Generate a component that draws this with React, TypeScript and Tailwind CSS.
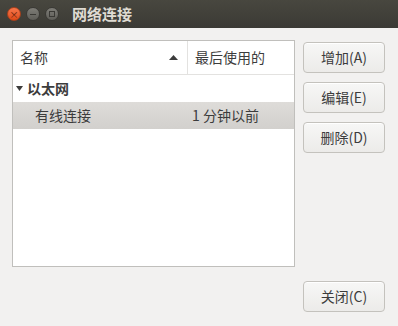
import React from "react";

const font = { fontFamily: '"Noto Sans CJK SC", "Noto Sans", sans-serif' };

function Btn({ label }: { label: string }) {
  return (
    <button className="w-[82px] h-[31px] rounded-[4px] border border-[#c4c2bd] bg-gradient-to-b from-[#f7f7f6] to-[#ecebe9] text-[14px] text-[#3c3c3c] shadow-[inset_0_1px_0_#ffffff] flex items-center justify-center">
      {label}
    </button>
  );
}

export default function App() {
  return (
    <div className="w-[398px] h-[326px] bg-[#f2f1f0] flex flex-col overflow-hidden" style={font}>
      {/* title bar */}
      <div className="h-[28px] bg-gradient-to-b from-[#48473f] to-[#3b3a35] flex items-center pl-[7px]">
        <div className="w-[14px] h-[14px] rounded-full bg-gradient-to-b from-[#f7764a] to-[#df4a16] border border-[#a8401c] flex items-center justify-center text-[9px] leading-none text-[#5a1d08]">
          ×
        </div>
        <div className="ml-[5px] w-[14px] h-[14px] rounded-full bg-gradient-to-b from-[#7e7d77] to-[#5e5d58] border border-[#3a3935] flex items-center justify-center">
          <div className="w-[6px] h-[1px] bg-[#3a3935]" />
        </div>
        <div className="ml-[5px] w-[14px] h-[14px] rounded-full bg-gradient-to-b from-[#7e7d77] to-[#5e5d58] border border-[#3a3935] flex items-center justify-center">
          <div className="w-[6px] h-[6px] border border-[#3a3935]" />
        </div>
        <span className="ml-[13px] text-[15px] font-bold text-[#dfdbd2]">网络连接</span>
      </div>

      {/* body */}
      <div className="flex pt-[12px] pl-[12px]">
        <div className="w-[283px] h-[227px] bg-white border border-[#c0bfbc] flex flex-col">
          <div className="h-[34px] flex border-b border-[#e3e2e0] text-[14px] text-[#3c3c3c]">
            <div className="w-[175px] border-r border-[#e3e2e0] flex items-center pl-[7px] pr-[9px] justify-between">
              <span>名称</span>
              <svg width="9" height="5" viewBox="0 0 9 5">
                <path d="M0 5 L4.5 0 L9 5 Z" fill="#3c3c3c" />
              </svg>
            </div>
            <div className="flex items-center pl-[7px]">最后使用的</div>
          </div>
          <div className="h-[27px] flex items-center pl-[3px] text-[14px] font-bold text-[#3c3c3c]">
            <svg width="7" height="5" viewBox="0 0 7 5" className="mr-[4px]">
              <path d="M0 0 L7 0 L3.5 5 Z" fill="#3c3c3c" />
            </svg>
            以太网
          </div>
          <div className="h-[27px] flex items-center text-[14px] text-[#3c3c3c] bg-gradient-to-b from-[#dedcd9] to-[#d2d0cd]">
            <span className="w-[179px] pl-[22px]">有线连接</span>
            <span>1 分钟以前</span>
          </div>
        </div>
        <div className="ml-[8px] mt-[2px] flex flex-col gap-[9px]">
          <Btn label="增加(A)" />
          <Btn label="编辑(E)" />
          <Btn label="删除(D)" />
        </div>
      </div>
      <div className="flex justify-end pr-[13px] mt-[14px]">
        <Btn label="关闭(C)" />
      </div>
    </div>
  );
}
